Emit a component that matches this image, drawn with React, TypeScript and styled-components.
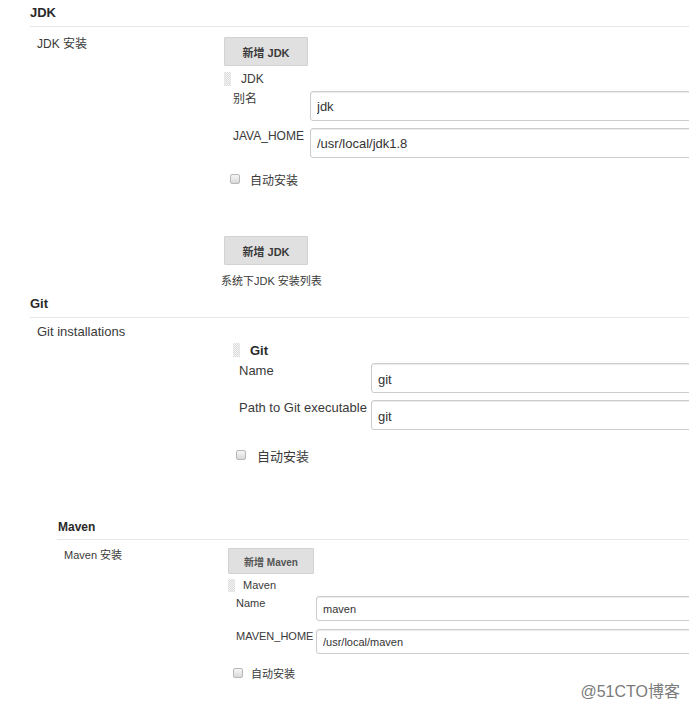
import styled, { createGlobalStyle } from "styled-components";

const Global = createGlobalStyle`
  body {
    margin: 0;
    background: #fff;
  }
`;

type Field = { label: string; value: string };

export default function App() {
  return (
    <Page>
      <Global />

      {/* JDK */}
      <Section $left={30} $size={12} $top={5}>
        <Heading $size={13} $pad={5}>JDK</Heading>
        <Body $labelWidth={194} $top={10}>
          <SectionLabel $indent={7} $lh={14}>JDK 安装</SectionLabel>
          <Content>
            <AddButton $w={84} $h={29} $size={11}>新增 JDK</AddButton>
            <ItemHead $top={5} $gap={10} $h={16}>
              <Handle $h={14} />
              JDK
            </ItemHead>
            <Fields $top={4} $indent={9} $labelWidth={77} $gap={7}>
              {jdkFields.map((f) => (
                <FieldRow key={f.label}>
                  <FieldLabel $pad={1} $lh={14}>{f.label}</FieldLabel>
                  <TextInput $h={30} $size={13} defaultValue={f.value} />
                </FieldRow>
              ))}
            </Fields>
            <CheckRow $top={14} $indent={6} $gap={10} $h={14}>
              <Check type="checkbox" />
              自动安装
            </CheckRow>
            <AddButton $w={84} $h={29} $size={11} $top={50}>新增 JDK</AddButton>
            <Note $top={9}>系统下JDK 安装列表</Note>
          </Content>
        </Body>
      </Section>

      {/* Git */}
      <Section $left={30} $size={13} $top={8}>
        <Heading $size={13} $pad={5}>Git</Heading>
        <Body $labelWidth={203} $top={6}>
          <SectionLabel $indent={7} $lh={16}>Git installations</SectionLabel>
          <Content>
            <ItemHead $top={18} $gap={10} $h={16} $bold>
              <Handle $h={14} />
              Git
            </ItemHead>
            <Fields $top={5} $indent={6} $labelWidth={132} $gap={7}>
              {gitFields.map((f) => (
                <FieldRow key={f.label}>
                  <FieldLabel $pad={0} $lh={16}>{f.label}</FieldLabel>
                  <TextInput $h={30} $size={13} $shift={2} defaultValue={f.value} />
                </FieldRow>
              ))}
            </Fields>
            <CheckRow $top={17} $indent={3} $gap={11} $h={16}>
              <Check type="checkbox" />
              自动安装
            </CheckRow>
          </Content>
        </Body>
      </Section>

      {/* Maven */}
      <Section $left={57} $size={11} $top={56}>
        <Heading $size={12} $pad={4} $indent={1}>Maven</Heading>
        <Body $labelWidth={171} $top={8}>
          <SectionLabel $indent={7} $lh={14}>Maven 安装</SectionLabel>
          <Content>
            <AddButton $w={86} $h={26} $size={10} $tone="#555">新增 Maven</AddButton>
            <ItemHead $top={4} $gap={8} $h={14}>
              <Handle $h={13} />
              Maven
            </ItemHead>
            <Fields $top={4} $indent={8} $labelWidth={80} $gap={8}>
              {mavenFields.map((f) => (
                <FieldRow key={f.label}>
                  <FieldLabel $pad={0} $lh={14}>{f.label}</FieldLabel>
                  <TextInput $h={25} $size={11} defaultValue={f.value} />
                </FieldRow>
              ))}
            </Fields>
            <CheckRow $top={12} $indent={5} $gap={8} $h={14}>
              <Check type="checkbox" />
              自动安装
            </CheckRow>
          </Content>
        </Body>
      </Section>

      <Watermark>@51CTO博客</Watermark>
    </Page>
  );
}

const jdkFields: Field[] = [
  { label: "别名", value: "jdk" },
  { label: "JAVA_HOME", value: "/usr/local/jdk1.8" },
];

const gitFields: Field[] = [
  { label: "Name", value: "git" },
  { label: "Path to Git executable", value: "git" },
];

const mavenFields: Field[] = [
  { label: "Name", value: "maven" },
  { label: "MAVEN_HOME", value: "/usr/local/maven" },
];

const Page = styled.div`
  position: relative;
  width: 689px;
  height: 712px;
  overflow: hidden;
  background: #fff;
  color: #3a3a3a;
  font-family: "Liberation Sans", Arial, "Noto Sans CJK SC", sans-serif;
`;

const Section = styled.section<{ $left: number; $size: number; $top: number }>`
  padding-left: ${({ $left }) => $left}px;
  padding-top: ${({ $top }) => $top}px;
  font-size: ${({ $size }) => $size}px;
`;

const Heading = styled.h3<{ $size: number; $pad: number; $indent?: number }>`
  margin: 0;
  padding-left: ${({ $indent }) => $indent ?? 0}px;
  padding-bottom: ${({ $pad }) => $pad}px;
  font-size: ${({ $size }) => $size}px;
  line-height: 16px;
  font-weight: bold;
  color: #2a2a2a;
  border-bottom: 1px solid #e6e6e6;
`;

const Body = styled.div<{ $labelWidth: number; $top: number }>`
  display: grid;
  grid-template-columns: ${({ $labelWidth }) => $labelWidth}px 1fr;
  margin-top: ${({ $top }) => $top}px;
`;

const SectionLabel = styled.div<{ $indent: number; $lh: number }>`
  padding-left: ${({ $indent }) => $indent}px;
  line-height: ${({ $lh }) => $lh}px;
`;

const Content = styled.div`
  display: flex;
  flex-direction: column;
  align-items: flex-start;
  min-width: 0;
`;

const AddButton = styled.button<{
  $w: number;
  $h: number;
  $size: number;
  $top?: number;
  $tone?: string;
}>`
  width: ${({ $w }) => $w}px;
  height: ${({ $h }) => $h}px;
  margin-top: ${({ $top }) => $top ?? 0}px;
  padding: 0;
  background: #e0e0e0;
  border: 1px solid #d2d2d2;
  border-radius: 1px;
  color: ${({ $tone }) => $tone ?? "#3a3a3a"};
  font-family: inherit;
  font-size: ${({ $size }) => $size}px;
  font-weight: bold;
  cursor: pointer;
`;

const ItemHead = styled.div<{ $top: number; $gap: number; $h: number; $bold?: boolean }>`
  display: flex;
  align-items: center;
  gap: ${({ $gap }) => $gap}px;
  height: ${({ $h }) => $h}px;
  margin-top: ${({ $top }) => $top}px;
  font-weight: ${({ $bold }) => ($bold ? "bold" : "normal")};
  color: ${({ $bold }) => ($bold ? "#2a2a2a" : "#3a3a3a")};
`;

/* drag handle: fine dotted grid */
const Handle = styled.span<{ $h: number }>`
  display: block;
  width: 7px;
  height: ${({ $h }) => $h}px;
  background: repeating-conic-gradient(#dcdcdc 0 25%, #f3f3f3 0 50%) 0 0 / 2px 2px;
`;

const Fields = styled.div<{ $top: number; $indent: number; $labelWidth: number; $gap: number }>`
  display: grid;
  grid-template-columns: ${({ $labelWidth }) => $labelWidth}px 1fr;
  row-gap: ${({ $gap }) => $gap}px;
  align-self: stretch;
  margin-top: ${({ $top }) => $top}px;
  margin-left: ${({ $indent }) => $indent}px;
`;

const FieldRow = styled.div`
  display: contents;
`;

const FieldLabel = styled.label<{ $pad: number; $lh: number }>`
  padding-top: ${({ $pad }) => $pad}px;
  line-height: ${({ $lh }) => $lh}px;
  white-space: nowrap;
`;

const TextInput = styled.input<{ $h: number; $size: number; $shift?: number }>`
  box-sizing: border-box;
  width: calc(100% + 30px);
  height: ${({ $h }) => $h}px;
  padding: ${({ $shift }) => $shift ?? 0}px 6px 0;
  border: 1px solid #cccccc;
  border-radius: 3px;
  box-shadow: inset 0 1px 1px rgba(0, 0, 0, 0.08);
  background: #fff;
  color: #333;
  font-family: inherit;
  font-size: ${({ $size }) => $size}px;
  outline: none;
`;

const CheckRow = styled.label<{ $top: number; $indent: number; $gap: number; $h: number }>`
  display: flex;
  align-items: center;
  gap: ${({ $gap }) => $gap}px;
  height: ${({ $h }) => $h}px;
  margin-top: ${({ $top }) => $top}px;
  margin-left: ${({ $indent }) => $indent}px;
`;

const Check = styled.input`
  appearance: none;
  margin: 0;
  width: 10px;
  height: 10px;
  border: 1px solid #b8b8b8;
  border-radius: 2px;
  background: linear-gradient(#f6f6f6, #d9d9d9);
`;

const Note = styled.div<{ $top: number }>`
  margin-top: ${({ $top }) => $top}px;
  margin-left: -3px;
  font-size: 11px;
  line-height: 14px;
`;

const Watermark = styled.div`
  position: absolute;
  right: 9px;
  bottom: 11px;
  font-size: 16px;
  line-height: 18px;
  color: #7a7a7a;
`;
